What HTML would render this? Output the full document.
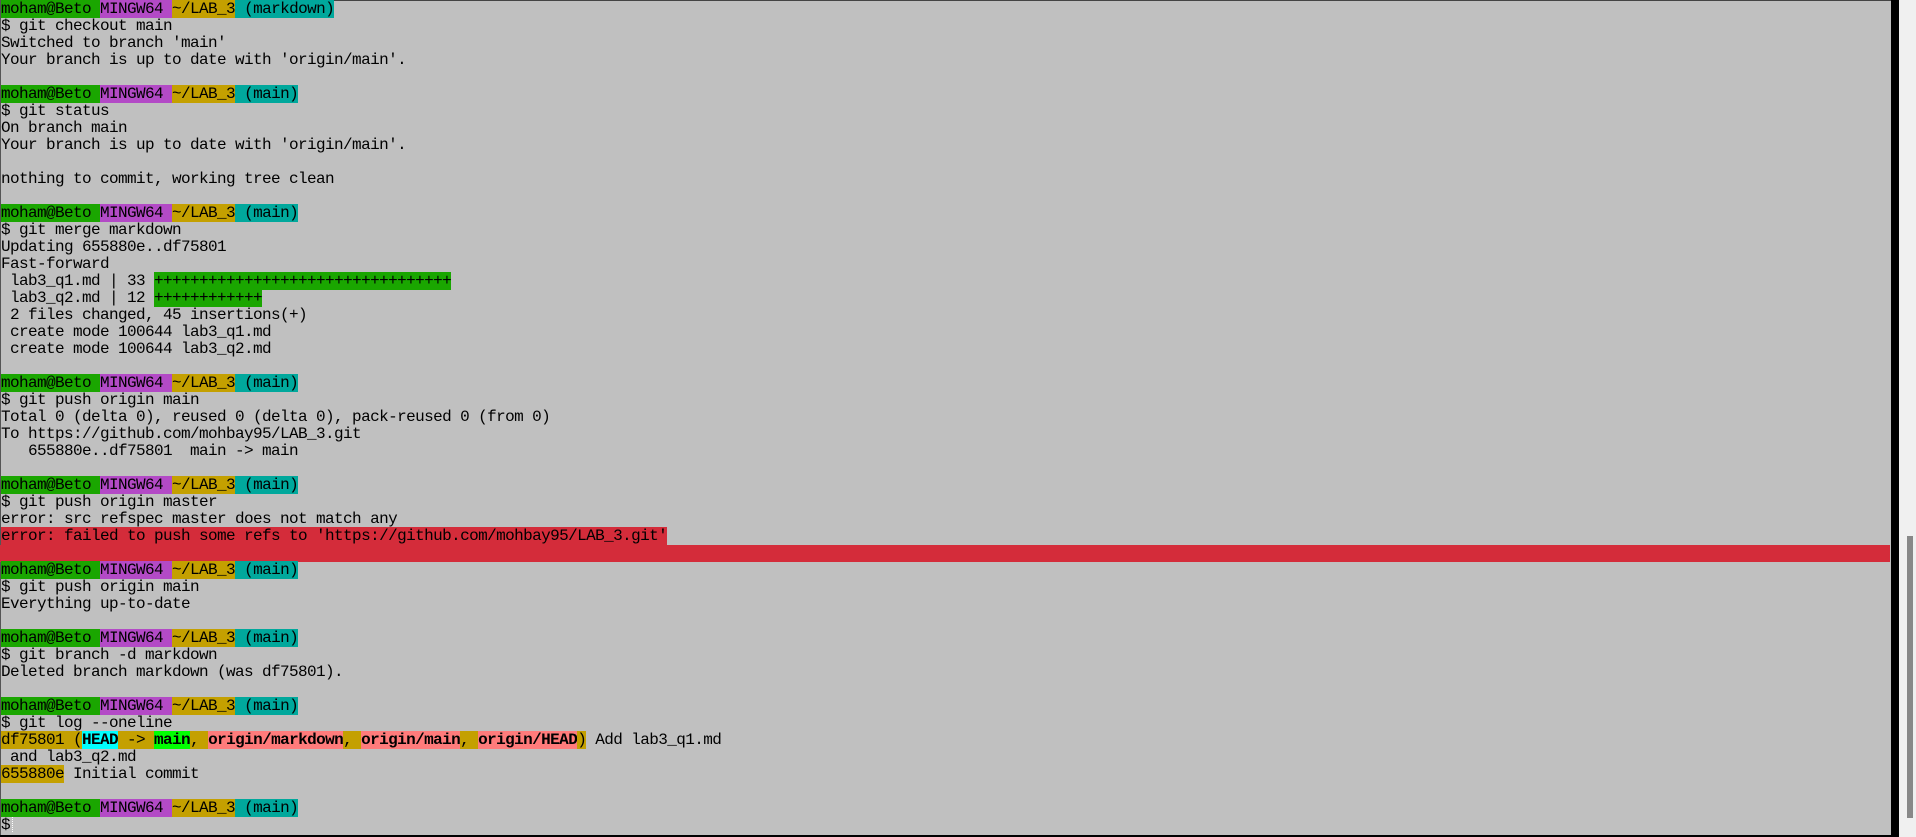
<!DOCTYPE html>
<html><head><meta charset="utf-8"><style>
html,body{margin:0;padding:0;width:1916px;height:837px;overflow:hidden;background:#f0f0f0;}
#term{position:absolute;left:0;top:0;width:1891px;height:835px;background:#c0c0c0;}
#rb{position:absolute;left:1891px;top:0;width:8px;height:837px;background:#000;}
#bb{position:absolute;left:0;top:835px;width:1899px;height:2px;background:#000;}
#tb{position:absolute;left:0;top:0;width:1891px;height:1px;background:#444;}
#lb{position:absolute;left:0;top:0;width:1px;height:835px;background:#555;}
#thumb{position:absolute;left:1907px;top:536px;width:6px;height:282px;background:#888;}
pre{margin:0;position:absolute;left:1px;top:1px;font-family:"Liberation Mono",monospace;font-size:16px;letter-spacing:-0.6px;line-height:17px;color:#000;}
.l{height:17px;white-space:pre;}
.g{background:#1aa600}.m{background:#b34ac6}.y{background:#c4a000}.t{background:#00a89c}
.c{background:#00ffff;font-weight:bold}.gg{background:#00ff00;font-weight:bold}.s{background:#ff7b7b;font-weight:bold}
.r{background:#d42c3a}
.full{background:#d42c3a;width:1890px;margin-left:-1px}
.cur{display:inline-block;width:1px;height:15px;border-left:1px dotted #fff;vertical-align:-3px;margin-left:2px}
</style></head><body>
<div id="term"></div><div id="tb"></div><div id="lb"></div><div id="rb"></div><div id="bb"></div><div id="thumb"></div>
<pre><div class="l"><span class="g">moham@Beto </span><span class="m">MINGW64 </span><span class="y">~/LAB_3</span><span class="t"> (markdown)</span></div><div class="l">$ git checkout main</div><div class="l">Switched to branch 'main'</div><div class="l">Your branch is up to date with 'origin/main'.</div><div class="l"></div><div class="l"><span class="g">moham@Beto </span><span class="m">MINGW64 </span><span class="y">~/LAB_3</span><span class="t"> (main)</span></div><div class="l">$ git status</div><div class="l">On branch main</div><div class="l">Your branch is up to date with 'origin/main'.</div><div class="l"></div><div class="l">nothing to commit, working tree clean</div><div class="l"></div><div class="l"><span class="g">moham@Beto </span><span class="m">MINGW64 </span><span class="y">~/LAB_3</span><span class="t"> (main)</span></div><div class="l">$ git merge markdown</div><div class="l">Updating 655880e..df75801</div><div class="l">Fast-forward</div><div class="l"> lab3_q1.md | 33 <span class="g">+++++++++++++++++++++++++++++++++</span></div><div class="l"> lab3_q2.md | 12 <span class="g">++++++++++++</span></div><div class="l"> 2 files changed, 45 insertions(+)</div><div class="l"> create mode 100644 lab3_q1.md</div><div class="l"> create mode 100644 lab3_q2.md</div><div class="l"></div><div class="l"><span class="g">moham@Beto </span><span class="m">MINGW64 </span><span class="y">~/LAB_3</span><span class="t"> (main)</span></div><div class="l">$ git push origin main</div><div class="l">Total 0 (delta 0), reused 0 (delta 0), pack-reused 0 (from 0)</div><div class="l">To https://github.com/mohbay95/LAB_3.git</div><div class="l">   655880e..df75801  main -&gt; main</div><div class="l"></div><div class="l"><span class="g">moham@Beto </span><span class="m">MINGW64 </span><span class="y">~/LAB_3</span><span class="t"> (main)</span></div><div class="l">$ git push origin master</div><div class="l">error: src refspec master does not match any</div><div class="l"><span class="r">error: failed to push some refs to 'https://github.com/mohbay95/LAB_3.git'</span></div><div class="l full"></div><div class="l"><span class="g">moham@Beto </span><span class="m">MINGW64 </span><span class="y">~/LAB_3</span><span class="t"> (main)</span></div><div class="l">$ git push origin main</div><div class="l">Everything up-to-date</div><div class="l"></div><div class="l"><span class="g">moham@Beto </span><span class="m">MINGW64 </span><span class="y">~/LAB_3</span><span class="t"> (main)</span></div><div class="l">$ git branch -d markdown</div><div class="l">Deleted branch markdown (was df75801).</div><div class="l"></div><div class="l"><span class="g">moham@Beto </span><span class="m">MINGW64 </span><span class="y">~/LAB_3</span><span class="t"> (main)</span></div><div class="l">$ git log --oneline</div><div class="l"><span class="y">df75801 (</span><span class="c">HEAD</span><span class="y"> -&gt; </span><span class="gg">main</span><span class="y">, </span><span class="s">origin/markdown</span><span class="y">, </span><span class="s">origin/main</span><span class="y">, </span><span class="s">origin/HEAD</span><span class="y">)</span> Add lab3_q1.md</div><div class="l"> and lab3_q2.md</div><div class="l"><span class="y">655880e</span> Initial commit</div><div class="l"></div><div class="l"><span class="g">moham@Beto </span><span class="m">MINGW64 </span><span class="y">~/LAB_3</span><span class="t"> (main)</span></div><div class="l">$<span class="cur"></span></div></pre>
</body></html>
